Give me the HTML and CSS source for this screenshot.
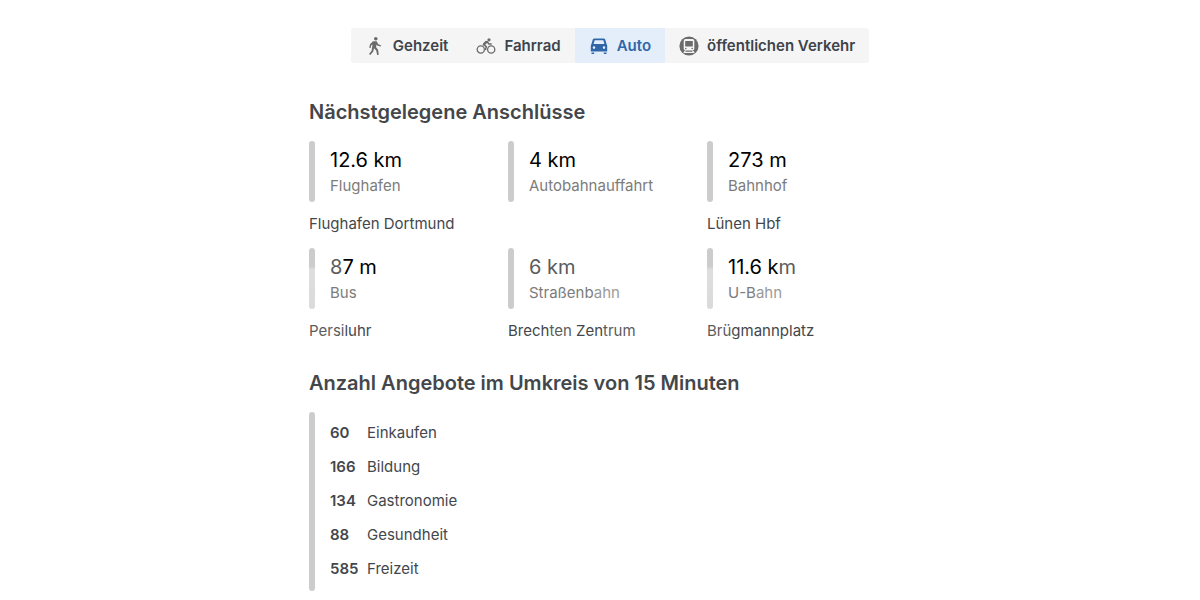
FILE: index.html
```html
<!DOCTYPE html>
<html lang="de">
<head>
    <meta charset="UTF-8">
    <meta name="viewport" content="width=device-width, initial-scale=1.0">
    <title>Erreichbarkeit</title>
    <link rel="stylesheet" href="styles.css">
</head>
<body>

<main class="page">
    <!-- Verkehrsmittel -->
    <nav class="modes">
        <button type="button" class="mode">
            <svg class="icon" viewBox="0 0 20 20" aria-hidden="true">
                <circle cx="10.8" cy="2.8" r="1.8" fill="currentColor"/>
                <path d="M8 5.300h3.600l1.700 3 2.700.900-.4 1.300-3.300-1-.8-1-.4 2.800 2 2.400.7 5-1.700.2-.9-4.400-2.200-2.200-.7 3.100-3 3.500-1.300-1 2.600-3.200.9-6.200-1.200.800-.7 2.700-1.400-.3.800-3.400z" fill="currentColor"/>
            </svg>
            Gehzeit
        </button>
        <button type="button" class="mode">
            <svg class="icon" viewBox="0 0 20 20" aria-hidden="true">
                <g fill="none" stroke="currentColor">
                    <circle cx="4.8" cy="13.5" r="3.6" stroke-width="1.3"/>
                    <circle cx="15.2" cy="13.5" r="3.6" stroke-width="1.3"/>
                    <path d="M10.9 5.2L7.4 8.6l3 2-1 3.4M10.9 5.2l2 2.8h2.8" stroke-width="1.5" stroke-linejoin="round"/>
                    <path d="M10.6 5.6L8 8.4" stroke-width="2.4"/>
                </g>
                <circle cx="13" cy="3.8" r="1.6" fill="currentColor"/>
            </svg>
            Fahrrad
        </button>
        <button type="button" class="mode active">
            <svg class="icon" viewBox="0 0 20 20" aria-hidden="true">
                <path fill="currentColor" fill-rule="evenodd" d="M5.3 2.500h9.400q1.200 0 1.600 1.200l1.300 4.600q.6.6.6 1.400v5.900H1.800V9.700q0-.8.6-1.400l1.300-4.600q.4-1.200 1.600-1.200zM5.700 4.200L4.600 8h10.800l-1.100-3.800zM5 10.300a1.300 1.300 0 1 0 0 2.600 1.300 1.300 0 0 0 0-2.600zM15 10.300a1.300 1.300 0 1 0 0 2.600 1.300 1.300 0 0 0 0-2.600z"/>
                <path fill="currentColor" d="M2.500 16.600h2.700v1.500H2.500zM14.800 16.600h2.700v1.500h-2.700z"/>
            </svg>
            Auto
        </button>
        <button type="button" class="mode">
            <svg class="icon" viewBox="0 0 20 20" aria-hidden="true">
                <circle cx="10" cy="10" r="9.6" fill="currentColor"/>
                <rect x="4.7" y="3" width="10.6" height="11.6" rx="2" fill="#f5f5f5"/>
                <rect x="6.2" y="5" width="7.6" height="5.500" fill="currentColor"/>
                <circle cx="6.8" cy="12.5" r=".8" fill="currentColor"/>
                <circle cx="13.2" cy="12.5" r=".8" fill="currentColor"/>
                <path d="M6.5 14.5L4.800 16.800M13.500 14.500l1.700 2.300M5.800 16.300h8.400" stroke="#f5f5f5" stroke-width="1.2"/>
            </svg>
            öffentlichen Verkehr
        </button>
    </nav>

    <!-- Anschlüsse -->
    <section class="section">
        <h2>Nächstgelegene Anschlüsse</h2>
        <div class="stops">
            <div class="stop">
                <div class="bar-box">
                    <p class="distance">12.6 km</p>
                    <p class="kind">Flughafen</p>
                </div>
                <p class="place">Flughafen Dortmund</p>
            </div>
            <div class="stop">
                <div class="bar-box">
                    <p class="distance">4 km</p>
                    <p class="kind">Autobahnauffahrt</p>
                </div>
            </div>
            <div class="stop">
                <div class="bar-box">
                    <p class="distance">273 m</p>
                    <p class="kind">Bahnhof</p>
                </div>
                <p class="place">Lünen Hbf</p>
            </div>
            <div class="stop">
                <div class="bar-box faded">
                    <p class="distance"><span class="soft">8</span>7 m</p>
                    <p class="kind">Bus</p>
                </div>
                <p class="place"><span class="soft">Persi</span>luhr</p>
            </div>
            <div class="stop">
                <div class="bar-box">
                    <p class="distance soft">6 km</p>
                    <p class="kind">Straßenb<span class="light">ahn</span></p>
                </div>
                <p class="place">Brech<span class="soft">ten</span> Zen<span class="soft">trum</span></p>
            </div>
            <div class="stop">
                <div class="bar-box faded">
                    <p class="distance">11.6 k<span class="soft">m</span></p>
                    <p class="kind">U-B<span class="light">ahn</span></p>
                </div>
                <p class="place"><span class="soft">Brü</span>gmannplatz</p>
            </div>
        </div>
    </section>

    <!-- Angebote -->
    <section class="section">
        <h2>Anzahl Angebote im Umkreis von 15 Minuten</h2>
        <div class="bar-box">
            <ul class="offers">
                <li><strong>60</strong><span>Einkaufen</span></li>
                <li><strong>166</strong><span>Bildung</span></li>
                <li><strong>134</strong><span>Gastronomie</span></li>
                <li><strong>88</strong><span>Gesundheit</span></li>
                <li><strong>585</strong><span>Freizeit</span></li>
            </ul>
        </div>
    </section>
</main>

</body>
</html>
```
FILE: styles.css
```css
* {
    box-sizing: border-box;
}
body {
    margin: 0;
    padding: 28px 0 8px 20px;
    background-color: #fff;
    color: #43474b;
    font-family: Inter, sans-serif;
    font-size: 15px;
    line-height: 24px;
}
h2, p, ul {
    margin: 0;
    padding: 0;
}
.page {
    max-width: 602px;
    margin: 0 auto;
}
.modes {
    display: flex;
    width: fit-content;
    margin: 0 auto 35px;
    border-radius: 3px;
    overflow: hidden;
}
.mode {
    display: flex;
    align-items: center;
    gap: 8px;
    height: 35px;
    padding: 0 14px;
    border: none;
    background-color: #f5f5f5;
    color: #3d444b;
    font-family: inherit;
    font-size: 15px;
    font-weight: 600;
    white-space: nowrap;
    cursor: pointer;
}
.icon {
    width: 20px;
    height: 20px;
    color: #6b6b6b;
}
.mode.active, .mode.active .icon {
    background-color: #e3eefa;
    color: #3066a8;
}
.section {
    margin-bottom: 26px;
}
.section:last-child {
    margin-bottom: 0;
}
h2 {
    margin-bottom: 15px;
    font-size: 20px;
    font-weight: 600;
    line-height: 28px;
}
.stops {
    display: grid;
    grid-template-columns: repeat(3, 1fr);
    row-gap: 12px;
    padding-right: 5px;
}
.bar-box {
    display: grid;
    grid-template-columns: 6px 1fr;
    column-gap: 15px;
}
.bar-box::before {
    content: "";
    grid-row: 1 / 3;
    border-radius: 3px;
    background-color: #cccccc;
}
.bar-box.faded::before {
    background: linear-gradient(#cccccc 30%, #dedede 36%, #dadada);
}
.distance {
    padding-top: 6px;
    color: #000;
    font-size: 20px;
    line-height: 26px;
}
.kind {
    grid-column: 2;
    padding-bottom: 3px;
    color: #7c7c7c;
    line-height: 26px;
}
.place {
    margin-top: 10px;
}
.soft {
    color: #5c5c5c;
}
.light {
    color: #9a9a9a;
}
.offers {
    padding: 4px 0 5px;
    list-style: none;
}
.offers li {
    display: grid;
    grid-template-columns: 37px 1fr;
    line-height: 34px;
}
.offers strong {
    font-weight: 600;
}
```
